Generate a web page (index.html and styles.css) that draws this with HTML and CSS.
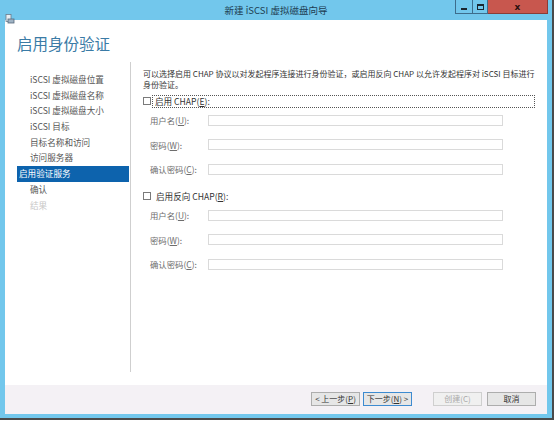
FILE: index.html
```html
<!DOCTYPE html>
<html>
<head>
<meta charset="utf-8">
<link rel="stylesheet" href="styles.css">
</head>
<body>
<div class="window">
  <div class="titlebar">
    <div class="appicon"><svg width="10" height="10" viewBox="0 0 10 10"><rect x="1" y="0.5" width="5" height="7" fill="#e8eef3" stroke="#6a7c8c" stroke-width="0.8"/><rect x="3" y="5" width="6" height="4" fill="#9fb3c4" stroke="#55687a" stroke-width="0.8"/></svg></div>
    <div class="title">新建 iSCSI 虚拟磁盘向导</div>
    <div class="ctrls">
      <div class="cbtn min"><span class="minbar"></span></div>
      <div class="cbtn max"><span class="maxbox"></span></div>
      <div class="cbtn close">x</div>
    </div>
  </div>
  <div class="client">
    <div class="header">启用身份验证</div>
    <div class="main">
      <ul class="nav">
        <li>iSCSI 虚拟磁盘位置</li>
        <li>iSCSI 虚拟磁盘名称</li>
        <li>iSCSI 虚拟磁盘大小</li>
        <li>iSCSI 目标</li>
        <li>目标名称和访问</li>
        <li>访问服务器</li>
        <li class="sel">启用验证服务</li>
        <li>确认</li>
        <li class="dis">结果</li>
      </ul>
      <div class="content">
        <p class="desc">可以选择启用 CHAP 协议以对发起程序连接进行身份验证，或启用反向 CHAP 以允许发起程序对 iSCSI 目标进行<br>身份验证。</p>
        <div class="check focus"><span class="box"></span><span class="clabel">启用 CHAP(<u>E</u>):</span></div>
        <div class="fields">
          <div class="row"><span class="lbl">用户名(<u>U</u>):</span><span class="inp"></span></div>
          <div class="row"><span class="lbl">密码(<u>W</u>):</span><span class="inp"></span></div>
          <div class="row"><span class="lbl">确认密码(<u>C</u>):</span><span class="inp"></span></div>
        </div>
        <div class="check second"><span class="box"></span><span class="clabel">启用反向 CHAP(<u>R</u>):</span></div>
        <div class="fields">
          <div class="row"><span class="lbl">用户名(<u>U</u>):</span><span class="inp"></span></div>
          <div class="row"><span class="lbl">密码(<u>W</u>):</span><span class="inp"></span></div>
          <div class="row"><span class="lbl">确认密码(<u>C</u>):</span><span class="inp"></span></div>
        </div>
      </div>
    </div>
    <div class="footer">
      <div class="btn">&lt; 上一步(<u>P</u>)</div>
      <div class="btn default">下一步(<u>N</u>) &gt;</div>
      <div class="btn disabled gapl">创建(C)</div>
      <div class="btn">取消</div>
    </div>
  </div>
</div>
</body>
</html>
```

FILE: styles.css
```css
* { box-sizing: border-box; }
html, body { margin: 0; padding: 0; background: #ffffff; }
body {
  width: 558px; height: 425px; overflow: hidden;
  font-family: "Noto Sans CJK SC", "Noto Sans", sans-serif;
  color: #333;
}
.window {
  width: 554px; height: 420px;
  background: #72c7ec;
  border-right: 2px solid #4a4a4a;
  border-bottom: 2px solid #4a4a4a;
  display: flex; flex-direction: column;
  padding: 0 5px 4px 5px;
}
.titlebar {
  height: 20px; flex: none;
  display: flex; align-items: flex-start;
  position: relative;
}
.appicon { width: 10px; height: 10px; margin: 5px 0 0 0; }
.title {
  position: absolute; left: 0; right: 0; top: 4px;
  text-align: center; font-size: 9.5px; color: #1d3d52;
  line-height: 12px;
}
.ctrls { margin-left: auto; display: flex; height: 14px; margin-right: -1px; }
.cbtn {
  height: 14px; display: flex; align-items: center; justify-content: center;
  border: 1px solid #3d6d8c; border-top: none;
}
.min { width: 17px; border-right: none; }
.max { width: 16px; }
.close { width: 60px; background: #c8574e; border-color: #8a3c37; border-left: none; color: #2a1010; font-size: 9px; font-weight: bold; font-family: "DejaVu Sans", sans-serif; }
.minbar { width: 6px; height: 2px; background: #1a2630; margin-top: 4px; }
.maxbox { width: 7px; height: 6px; border: 1px solid #1a2630; border-top-width: 2px; }
.client {
  flex: 1; background: #fff;
  display: flex; flex-direction: column;
}
.header {
  height: 42px; flex: none;
  padding: 13px 0 0 12px;
  font-size: 15.5px; color: #3a7ba6; line-height: 20px;
}
.main { flex: 1; display: flex; padding-bottom: 13px; }
.nav {
  list-style: none; margin: 0; padding: 10px 0 0 12px;
  width: 126px; border-right: 1px solid #cfcfcf;
  font-size: 8.6px; line-height: 15.7px; color: #555;
}
.nav li { padding-left: 13px; height: 15.7px; white-space: nowrap; }
.nav li.sel { background: #0d63ad; color: #fff; padding-left: 2px; width: 112px; }
.nav li.dis { color: #c8c8c8; }
.content { flex: 1; padding: 6px 0 0 12px; }
.desc { margin: 0; font-size: 8px; line-height: 11px; color: #333; white-space: nowrap; }
.check { display: flex; align-items: center; height: 12px; font-size: 8.6px; color: #333; }
.check.focus { margin-top: 5px; }
.check.second { margin-top: 16px; }
.box { width: 8px; height: 8px; border: 1px solid #7a7a7a; background: #fff; flex: none; margin-right: 2px; }
.focus .clabel { flex: 1; outline: 1px dotted #555; outline-offset: 0; padding-left: 2px; margin-right: 13px; height: 11px; line-height: 11px; }
.second .clabel { padding-left: 3px; }
.fields { padding: 8px 0 0 7px; display: flex; flex-direction: column; gap: 14.5px; }
.row { display: flex; align-items: center; height: 10px; }
.lbl { width: 58px; font-size: 8.4px; color: #6d6d6d; white-space: nowrap; }
.inp { width: 295px; height: 11px; border: 1px solid #dadada; background: #fff; }
.footer {
  height: 29px; flex: none; background: #f4f1f5;
  display: flex; align-items: center; justify-content: flex-end;
  padding: 0 11px 2px 0; gap: 3px;
}
.btn {
  width: 49px; height: 14px; border: 1px solid #adadad; background: #e6e6e6;
  font-size: 8px; line-height: 12px; text-align: center; color: #333; white-space: nowrap;
}
.btn.default { border-color: #3d8bd0; }
.btn.disabled { color: #aaa; background: #f0f0f0; border-color: #cfcfcf; }
.btn.gapl { margin-left: 18px; margin-right: 2px; }
u { text-decoration: underline; }
```
